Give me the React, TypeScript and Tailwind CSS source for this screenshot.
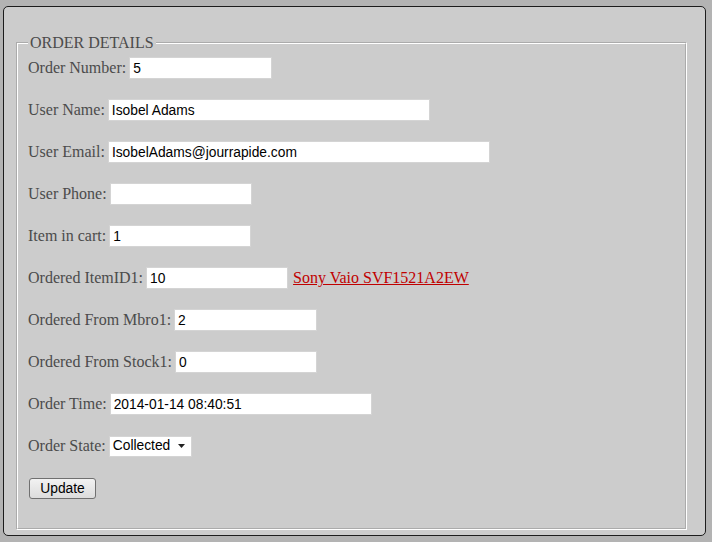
import React from "react";

const serif = "font-['Liberation_Serif','Times_New_Roman',serif]";
const sans = "font-['Liberation_Sans',Arial,sans-serif]";

function Field({ label, value, width, children }: { label: string; value: string; width: string; children?: React.ReactNode }) {
  return (
    <div className="flex h-[22px] items-center">
      <label className={`${serif} text-[16px] leading-[18px] text-[#4b4b4b] mr-[3px]`}>{label}</label>
      <input
        readOnly
        value={value}
        className={`${sans} ${width} h-[22px] border border-[#d4d4d4] bg-white px-[3px] text-[13.8px] text-black outline-none`}
      />
      {children}
    </div>
  );
}

export default function App() {
  return (
    <div className="h-[542px] w-[712px] bg-[#b3b3b3] pl-[3px] pt-[6px]">
      <div className="h-[530px] w-[703px] rounded-[5px] border border-[#1c1c1c] bg-[#cccccc] pl-[12px] pr-[18px] pt-[27px]">
        <fieldset className="h-[496px] border-2 border-white [border-style:groove] pl-[10px]">
          <legend className={`${serif} px-[2px] text-[16px] leading-[18px] text-[#4b4b4b]`}>ORDER DETAILS</legend>
          <div className="flex flex-col gap-[20px] pt-[5px]">
            <Field label="Order Number:" value="5" width="w-[143px]" />
            <Field label="User Name:" value="Isobel Adams" width="w-[322px]" />
            <Field label="User Email:" value="IsobelAdams@jourrapide.com" width="w-[382px]" />
            <Field label="User Phone:" value="" width="w-[142px]" />
            <Field label="Item in cart:" value="1" width="w-[142px]" />
            <Field label="Ordered ItemID1:" value="10" width="w-[142px]">
              <a href="#" className={`${serif} ml-[5px] text-[16px] leading-[18px] text-[#c00000] underline`}>
                Sony Vaio SVF1521A2EW
              </a>
            </Field>
            <Field label="Ordered From Mbro1:" value="2" width="w-[143px]" />
            <Field label="Ordered From Stock1:" value="0" width="w-[142px]" />
            <Field label="Order Time:" value="2014-01-14 08:40:51" width="w-[262px]" />
            <div className="flex h-[22px] items-center">
              <label className={`${serif} text-[16px] leading-[18px] text-[#4b4b4b] mr-[3px]`}>Order State:</label>
              <div className={`${sans} flex h-[21px] w-[83px] items-center justify-between border border-[#d4d4d4] bg-white pl-[3px] pr-[6px] text-[13.8px] text-black`}>
                <span>Collected</span>
                <svg width="7" height="4" viewBox="0 0 7 4">
                  <path d="M0 0h7L3.5 4z" fill="#222" />
                </svg>
              </div>
            </div>
          </div>
          <button
            className={`${sans} mt-[21px] ml-px h-[21px] w-[67px] rounded-[3px] border border-[#707070] bg-gradient-to-b from-[#f2f2f2] to-[#dcdcdc] text-[13.8px] text-black`}
          >
            Update
          </button>
        </fieldset>
      </div>
    </div>
  );
}
